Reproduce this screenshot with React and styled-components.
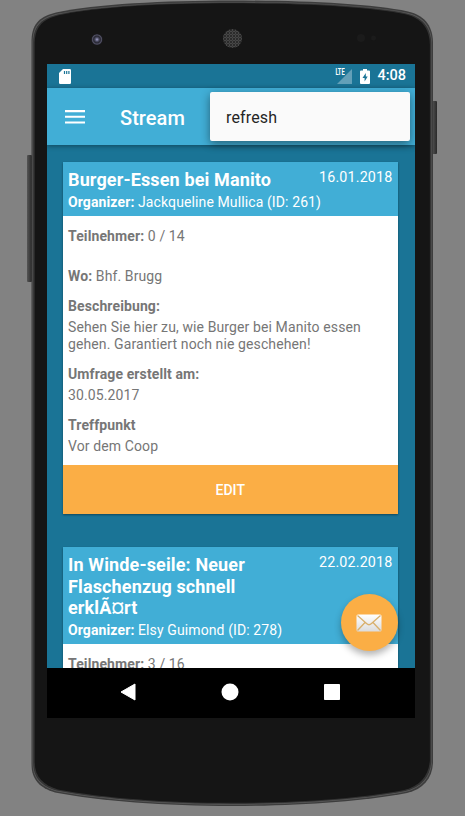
import React from "react";
import styled, { createGlobalStyle } from "styled-components";

const GlobalStyle = createGlobalStyle`
  * { box-sizing: border-box; }
  body { margin: 0; background: #828282; font-family: Roboto, sans-serif; }
`;

const Stage = styled.div`
  position: relative;
  width: 465px;
  height: 816px;
  overflow: hidden;
  padding: 64px 50px 0 47px;
  background: #828282;
`;

const Hardware = styled.svg`
  position: absolute;
  inset: 0;
`;

const Screen = styled.main`
  position: relative;
  display: flex;
  flex-direction: column;
  width: 368px;
  height: 654px;
  background: #1a7496;
  overflow: hidden;
`;

const StatusBar = styled.div`
  display: flex;
  align-items: center;
  height: 24px;
  flex: none;
  padding: 0 9px 0 12px;
  color: #fff;
  background: #1a7496;
`;

const StatusGroup = styled.div`
  display: flex;
  align-items: center;
  margin-left: auto;
`;

const Clock = styled.span`
  margin-left: 7px;
  font-size: 14.5px;
  font-weight: 500;
  line-height: 24px;
`;

const Network = styled.span`
  position: relative;
  display: flex;
  margin-right: 8px;
`;

const NetworkLabel = styled.span`
  position: absolute;
  top: -1px;
  right: 8px;
  font: 700 8.5px/8px Roboto, sans-serif;
  transform: scaleX(0.68);
  transform-origin: right;
`;

const Toolbar = styled.header`
  position: relative;
  z-index: 1;
  display: flex;
  align-items: center;
  flex: none;
  height: 57px;
  padding: 0 5px 0 18px;
  background: #41aed6;
  box-shadow: 0 1px 5px rgba(0, 0, 0, 0.4);
`;

const MenuButton = styled.button`
  display: flex;
  padding: 0;
  border: 0;
  background: none;
`;

const PageTitle = styled.h1`
  margin: 3px 0 0 35px;
  color: #fff;
  font-size: 20px;
  font-weight: 500;
  line-height: 24px;
  letter-spacing: 0.05px;
`;

const Popup = styled.div`
  display: flex;
  align-items: center;
  width: 200.500px;
  height: 49px;
  margin: 0 0 0 auto;
  padding: 2px 16.500px 0;
  border-radius: 2px;
  color: #252525;
  background: #fafafa;
  font-size: 16px;
  letter-spacing: 0.15px;
  box-shadow: 0 3px 10px rgba(0, 0, 0, 0.45);
`;

const Feed = styled.div`
  display: flex;
  flex: 1;
  flex-direction: column;
  gap: 33px;
  min-height: 0;
  padding: 17px 17.500px 0 16px;
  overflow: hidden;
`;

const Card = styled.article`
  flex: none;
  background: #fff;
  color: #767676;
  letter-spacing: 0.11px;
  box-shadow: 0 1px 2px rgba(0, 0, 0, 0.4);
`;

const CardHeader = styled.div`
  height: ${(p) => p.$height}px;
  padding: 7px 5px 0;
  color: #fff;
  background: #41aed6;
`;

const TitleRow = styled.div`
  display: flex;
  justify-content: space-between;
  align-items: flex-start;
`;

const CardTitle = styled.h2`
  width: 210px;
  margin: 0;
  font-size: 18px;
  font-weight: 700;
  line-height: 21.5px;
  letter-spacing: 0.14px;
`;

const DateText = styled.time`
  margin-top: 1px;
  font-size: 14.3px;
  line-height: 15px;
  letter-spacing: 0.17px;
`;

const Line = styled.div`
  margin-top: ${(p) => p.$gap || 0}px;
  font-size: 14px;
  line-height: 17px;
  white-space: pre-line;
`;

const CardBody = styled.div`
  height: 249px;
  padding: 12px 5px 0;
`;

const EditButton = styled.button`
  display: block;
  width: 100%;
  height: 49px;
  border: 0;
  padding: 1px 0 0;
  color: #fff;
  background: #fbae45;
  font: 500 14px Roboto, sans-serif;
`;

const ComposeButton = styled.button`
  position: absolute;
  right: 17.500px;
  bottom: 67px;
  z-index: 2;
  display: flex;
  align-items: center;
  justify-content: center;
  width: 57px;
  height: 57px;
  padding: 0;
  border: 0;
  border-radius: 50%;
  background: #fbae45;
  box-shadow: 0 4px 7px rgba(0, 0, 0, 0.3);
`;

const NavBar = styled.nav`
  position: relative;
  display: flex;
  align-items: center;
  justify-content: space-between;
  flex: none;
  height: 50px;
  padding: 0 75px 2px 73px;
  background: #000;
`;

const outline =
  "M31.5 40 C32 22 42 16 56 12.5 C95 4 165 .5 232 .5 C300 .5 370 3.5 408 11.5 C423 15 432.5 24 433 42 V763 C432 779 423 789 407 793 C360 802 295 806 232 806 C165 806 100 801 55 792.5 C40 788 31.5 780 31.5 764 Z";

const Phone = () => (
  <Hardware width="465" height="816" viewBox="0 0 465 816" aria-hidden="true">
    <defs>
      <radialGradient id="lens">
        <stop offset="0" stopColor="#a5a5cc" />
        <stop offset=".35" stopColor="#4c4c63" />
        <stop offset=".6" stopColor="#282833" />
        <stop offset=".85" stopColor="#504f62" />
        <stop offset="1" stopColor="#252530" />
      </radialGradient>
      <pattern id="mesh" width="3" height="3" patternUnits="userSpaceOnUse">
        <circle cx="1.5" cy="1.5" r=".9" fill="none" stroke="#626262" strokeWidth=".7" />
      </pattern>
      <linearGradient id="key" x2="1">
        <stop stopColor="#555" />
        <stop offset="1" stopColor="#292929" />
      </linearGradient>
    </defs>
    <rect x="27" y="155" width="5" height="127" rx="1" fill="url(#key)" />
    <rect x="432" y="101" width="5" height="53" rx="1" fill="url(#key)" />
    <path d={outline} fill="#3d3d3d" />
    <path d={outline} fill="#5a5a5a" transform="translate(1.2 1.4) scale(.9948 .9966)" />
    <path d={outline} fill="#333" transform="translate(1.9 2) scale(.9918 .995)" />
    <path d={outline} fill="#151515" transform="translate(3.7 2.8) scale(.9842 .9926)" />
    <circle cx="97" cy="39.5" r="5.500" fill="url(#lens)" />
    <circle cx="232.500" cy="38.500" r="9.500" fill="#222" />
    <circle cx="232.500" cy="38.500" r="9.500" fill="url(#mesh)" />
    <circle cx="361" cy="38" r="4" fill="#1b1b1b" />
    <circle cx="373.500" cy="38" r="2.500" fill="#1b1b1b" />
  </Hardware>
);

const SdCard = () => (
  <svg width="12" height="15" viewBox="0 0 12 15">
    <path d="M4 0H10.800Q12 0 12 1.200V13.800Q12 15 10.800 15H1.200Q0 15 0 13.800V4Z" fill="#fff" />
    <path d="M5.500 2v3M7.700 2v3M9.900 2v3" stroke="#1a7496" strokeWidth="1.200" />
  </svg>
);

const Signal = () => (
  <svg width="15" height="15" viewBox="0 0 15 15">
    <path d="M15 0V15H0Z" fill="#63a0b8" />
  </svg>
);

const Battery = () => (
  <svg width="10" height="15" viewBox="0 0 10 15">
    <path d="M3 0H7V1.500H9Q10 1.500 10 2.500V14Q10 15 9 15H1Q0 15 0 14V2.500Q0 1.500 1 1.500H3Z" fill="#fff" />
    <path d="M5.800 4 2.500 9H4.600V12.500L7.700 7.500H5.800Z" fill="#1a7496" />
  </svg>
);

const Hamburger = () => (
  <svg width="20" height="14" viewBox="0 0 20 14">
    <path d="M0 1.100H20M0 6.800H20M0 12.500H20" stroke="#fff" strokeWidth="2.100" />
  </svg>
);

const Envelope = () => (
  <svg width="26" height="18" viewBox="0 0 26 18">
    <defs>
      <linearGradient id="paper" x2="0" y2="1">
        <stop stopColor="#fff" />
        <stop offset="1" stopColor="#dcdcdc" />
      </linearGradient>
    </defs>
    <rect x=".5" y=".5" width="25" height="17" rx="1.500" fill="url(#paper)" />
    <path d="M1.500 1.500 10.500 9.500Q13 12 15.500 9.500L24.500 1.500M1.500 16.500 9 8.500M24.500 16.500 17 8.500" fill="none" stroke="#d9b06c" strokeWidth="1.300" />
  </svg>
);

export default function App() {
  return (
    <>
      <GlobalStyle />
      <Stage>
        <Phone />
        <Screen>
          <StatusBar>
            <SdCard />
            <StatusGroup>
              <Network>
                <Signal />
                <NetworkLabel>LTE</NetworkLabel>
              </Network>
              <Battery />
              <Clock>4:08</Clock>
            </StatusGroup>
          </StatusBar>
          <Toolbar>
            <MenuButton aria-label="Menu"><Hamburger /></MenuButton>
            <PageTitle>Stream</PageTitle>
            <Popup>refresh</Popup>
          </Toolbar>
          <Feed>
            <Card>
              <CardHeader $height={54}>
                <TitleRow>
                  <CardTitle>Burger-Essen bei Manito</CardTitle>
                  <DateText>16.01.2018</DateText>
                </TitleRow>
                <Line $gap={3}><b>Organizer:</b> Jackqueline Mullica (ID: 261)</Line>
              </CardHeader>
              <CardBody>
                <Line><b>Teilnehmer:</b> 0 / 14</Line>
                <Line $gap={23}><b>Wo:</b> Bhf. Brugg</Line>
                <Line $gap={13}><b>Beschreibung:</b></Line>
                <Line $gap={4}>{"Sehen Sie hier zu, wie Burger bei Manito essen\ngehen. Garantiert noch nie geschehen!"}</Line>
                <Line $gap={13}><b>Umfrage erstellt am:</b></Line>
                <Line $gap={4}>30.05.2017</Line>
                <Line $gap={13}><b>Treffpunkt</b></Line>
                <Line $gap={4}>Vor dem Coop</Line>
              </CardBody>
              <EditButton>EDIT</EditButton>
            </Card>
            <Card>
              <CardHeader $height={97}>
                <TitleRow>
                  <CardTitle>In Winde-seile: Neuer Flaschenzug schnell erklÃ¤rt</CardTitle>
                  <DateText>22.02.2018</DateText>
                </TitleRow>
                <Line $gap={3}><b>Organizer:</b> Elsy Guimond (ID: 278)</Line>
              </CardHeader>
              <CardBody>
                <Line><b>Teilnehmer:</b> 3 / 16</Line>
              </CardBody>
            </Card>
          </Feed>
          <ComposeButton aria-label="Compose"><Envelope /></ComposeButton>
          <NavBar>
            <svg width="16" height="18" viewBox="0 0 16 18">
              <path d="M15 1V17L1 9Z" fill="#fff" stroke="#fff" strokeLinejoin="round" />
            </svg>
            <svg width="18" height="18" viewBox="0 0 18 18">
              <circle cx="9" cy="9" r="8.500" fill="#fff" />
            </svg>
            <svg width="16" height="16" viewBox="0 0 16 16">
              <rect width="16" height="16" rx=".8" fill="#fff" />
            </svg>
          </NavBar>
        </Screen>
      </Stage>
    </>
  );
}
